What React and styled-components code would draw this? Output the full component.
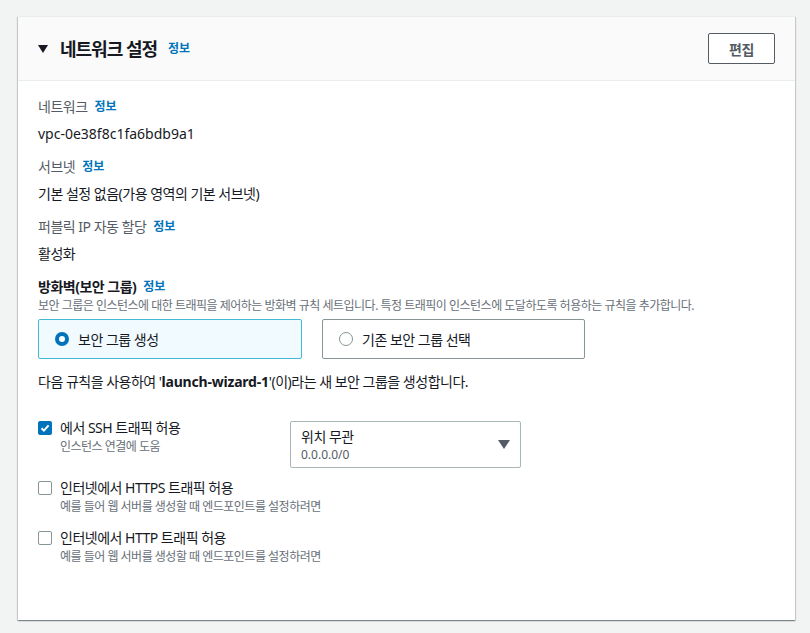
import styled, { createGlobalStyle } from "styled-components";

const Global = createGlobalStyle`
  body {
    margin: 0;
    background: #f2f3f3;
    font-family: "Noto Sans", "Noto Sans CJK KR", sans-serif;
    color: #16191f;
    letter-spacing: -0.5px;
  }
`;

const Page = styled.div`
  padding: 16px 15px 11px 18px;
`;

const Card = styled.section`
  background: #fff;
  box-shadow: 0 1px 1px 0 rgba(0, 28, 36, 0.3), 1px 1px 1px 0 rgba(0, 28, 36, 0.15),
    -1px 1px 1px 0 rgba(0, 28, 36, 0.15);
  border-top: 1px solid #eaeded;
`;

const Header = styled.header`
  display: flex;
  align-items: center;
  justify-content: space-between;
  height: 63px;
  padding: 0 20px;
  background: #fafafa;
  border-bottom: 1px solid #eaeded;
`;

const Title = styled.h2`
  display: flex;
  align-items: center;
  margin: 0;
  font-size: 18px;
  font-weight: 700;
  line-height: 22px;
  letter-spacing: -1px;
  color: #16191f;

  svg {
    margin-right: 12px;
  }
`;

const Info = styled.a`
  margin-left: ${(p) => p.$gap || 7}px;
  font-size: 12px;
  font-weight: 700;
  letter-spacing: 0;
  color: #0073bb;
  text-decoration: none;
`;

const EditButton = styled.button`
  width: 67px;
  height: 31px;
  border: 1px solid #545b64;
  border-radius: 2px;
  background: #fff;
  color: #545b64;
  font-family: inherit;
  font-size: 14px;
  font-weight: 700;
  letter-spacing: -0.5px;
`;

const Body = styled.div`
  padding: 15px 20px 51px;
`;

const Field = styled.div`
  margin-bottom: 11px;
`;

const Label = styled.div`
  display: flex;
  align-items: center;
  font-size: 14px;
  line-height: 22px;
  color: #545b64;
  margin-bottom: 5px;
`;

const Value = styled.div`
  font-size: 14px;
  line-height: 22px;
  color: #16191f;
  letter-spacing: ${(p) => (p.$latin ? 0 : -0.5)}px;
`;

const GroupLabel = styled.div`
  display: flex;
  align-items: center;
  font-size: 14px;
  font-weight: 700;
  line-height: 22px;
  color: #16191f;
`;

const Desc = styled.div`
  font-size: 12px;
  line-height: 16px;
  color: #687078;
  white-space: nowrap;
`;

const Tiles = styled.div`
  display: flex;
  gap: 20px;
  margin-top: 5px;
`;

const Tile = styled.div`
  display: flex;
  align-items: center;
  gap: 9px;
  width: ${(p) => p.$w}px;
  height: 40px;
  box-sizing: border-box;
  padding-left: 16px;
  border: 1px solid ${(p) => (p.$active ? "#44b9d6" : "#879596")};
  border-radius: 2px;
  background: ${(p) => (p.$active ? "#f1faff" : "#fff")};
  font-size: 14px;
  color: #16191f;
`;

const Radio = styled.span`
  width: 14px;
  height: 14px;
  box-sizing: border-box;
  border-radius: 50%;
  border: ${(p) => (p.$checked ? "4px solid #0073bb" : "1px solid #879596")};
  background: #fff;
`;

const Note = styled.p`
  margin: 12px 0 0;
  font-size: 14px;
  line-height: 22px;

  b {
    font-weight: 700;
    letter-spacing: -0.2px;
  }
`;

const Rules = styled.div`
  display: flex;
  flex-direction: column;
  gap: 8px;
  margin-top: 24px;
`;

const Rule = styled.div`
  display: flex;
  align-items: flex-start;
  padding-bottom: ${(p) => (p.$tall ? 1 : 4)}px;
`;

const Check = styled.span`
  flex: none;
  display: flex;
  align-items: center;
  justify-content: center;
  width: 14px;
  height: 14px;
  margin-top: 4px;
  box-sizing: border-box;
  border-radius: 2px;
  border: ${(p) => (p.$checked ? "none" : "1px solid #879596")};
  background: ${(p) => (p.$checked ? "#0073bb" : "#fff")};
`;

const RuleText = styled.div`
  width: 230px;
  margin-left: 8px;
`;

const RuleTitle = styled.div`
  font-size: 14px;
  line-height: 22px;
`;

const Select = styled.div`
  display: flex;
  align-items: center;
  justify-content: space-between;
  width: 231px;
  height: 47px;
  box-sizing: border-box;
  margin-top: 4px;
  padding: 0 10px;
  border: 1px solid #aab7b8;
  border-radius: 2px;
`;

const SelectMain = styled.div`
  font-size: 14px;
  line-height: 20px;
`;

const SelectSub = styled.div`
  font-size: 12px;
  line-height: 16px;
  letter-spacing: 0;
  color: #545b64;
`;

const fields = [
  { label: "네트워크", value: "vpc-0e38f8c1fa6bdb9a1", latin: true },
  { label: "서브넷", value: "기본 설정 없음(가용 영역의 기본 서브넷)" },
  { label: "퍼블릭 IP 자동 할당", value: "활성화" },
];

const rules = [
  { title: "에서 SSH 트래픽 허용", desc: "인스턴스 연결에 도움", checked: true, select: true },
  {
    title: "인터넷에서 HTTPS 트래픽 허용",
    desc: "예를 들어 웹 서버를 생성할 때 엔드포인트를 설정하려면",
  },
  {
    title: "인터넷에서 HTTP 트래픽 허용",
    desc: "예를 들어 웹 서버를 생성할 때 엔드포인트를 설정하려면",
  },
];

export default function App() {
  return (
    <Page>
      <Global />
      <Card>
        <Header>
          <Title>
            <svg width="10" height="8" viewBox="0 0 10 8">
              <path d="M0 0h10L5 8z" fill="#16191f" />
            </svg>
            네트워크 설정
            <Info $gap={11}>정보</Info>
          </Title>
          <EditButton>편집</EditButton>
        </Header>
        <Body>
          {fields.map((f) => (
            <Field key={f.label}>
              <Label>
                {f.label}
                <Info>정보</Info>
              </Label>
              <Value $latin={f.latin}>{f.value}</Value>
            </Field>
          ))}
          <GroupLabel>
            방화벽(보안 그룹)
            <Info>정보</Info>
          </GroupLabel>
          <Desc>
            보안 그룹은 인스턴스에 대한 트래픽을 제어하는 방화벽 규칙 세트입니다. 특정 트래픽이
            인스턴스에 도달하도록 허용하는 규칙을 추가합니다.
          </Desc>
          <Tiles>
            <Tile $w={264} $active>
              <Radio $checked />
              보안 그룹 생성
            </Tile>
            <Tile $w={263}>
              <Radio />
              기존 보안 그룹 선택
            </Tile>
          </Tiles>
          <Note>
            다음 규칙을 사용하여 '<b>launch-wizard-1</b>'(이)라는 새 보안 그룹을 생성합니다.
          </Note>
          <Rules>
            {rules.map((r) => (
              <Rule key={r.title} $tall={r.select}>
                <Check $checked={r.checked}>
                  {r.checked && (
                    <svg width="10" height="10" viewBox="0 0 10 10">
                      <path
                        d="M1.5 5.2l2.4 2.4L8.6 2.4"
                        fill="none"
                        stroke="#fff"
                        strokeWidth="2"
                      />
                    </svg>
                  )}
                </Check>
                <RuleText>
                  <RuleTitle>{r.title}</RuleTitle>
                  <Desc>{r.desc}</Desc>
                </RuleText>
                {r.select && (
                  <Select>
                    <div>
                      <SelectMain>위치 무관</SelectMain>
                      <SelectSub>0.0.0.0/0</SelectSub>
                    </div>
                    <svg width="12" height="9" viewBox="0 0 12 9">
                      <path d="M0 0h12L6 9z" fill="#545b64" />
                    </svg>
                  </Select>
                )}
              </Rule>
            ))}
          </Rules>
        </Body>
      </Card>
    </Page>
  );
}
